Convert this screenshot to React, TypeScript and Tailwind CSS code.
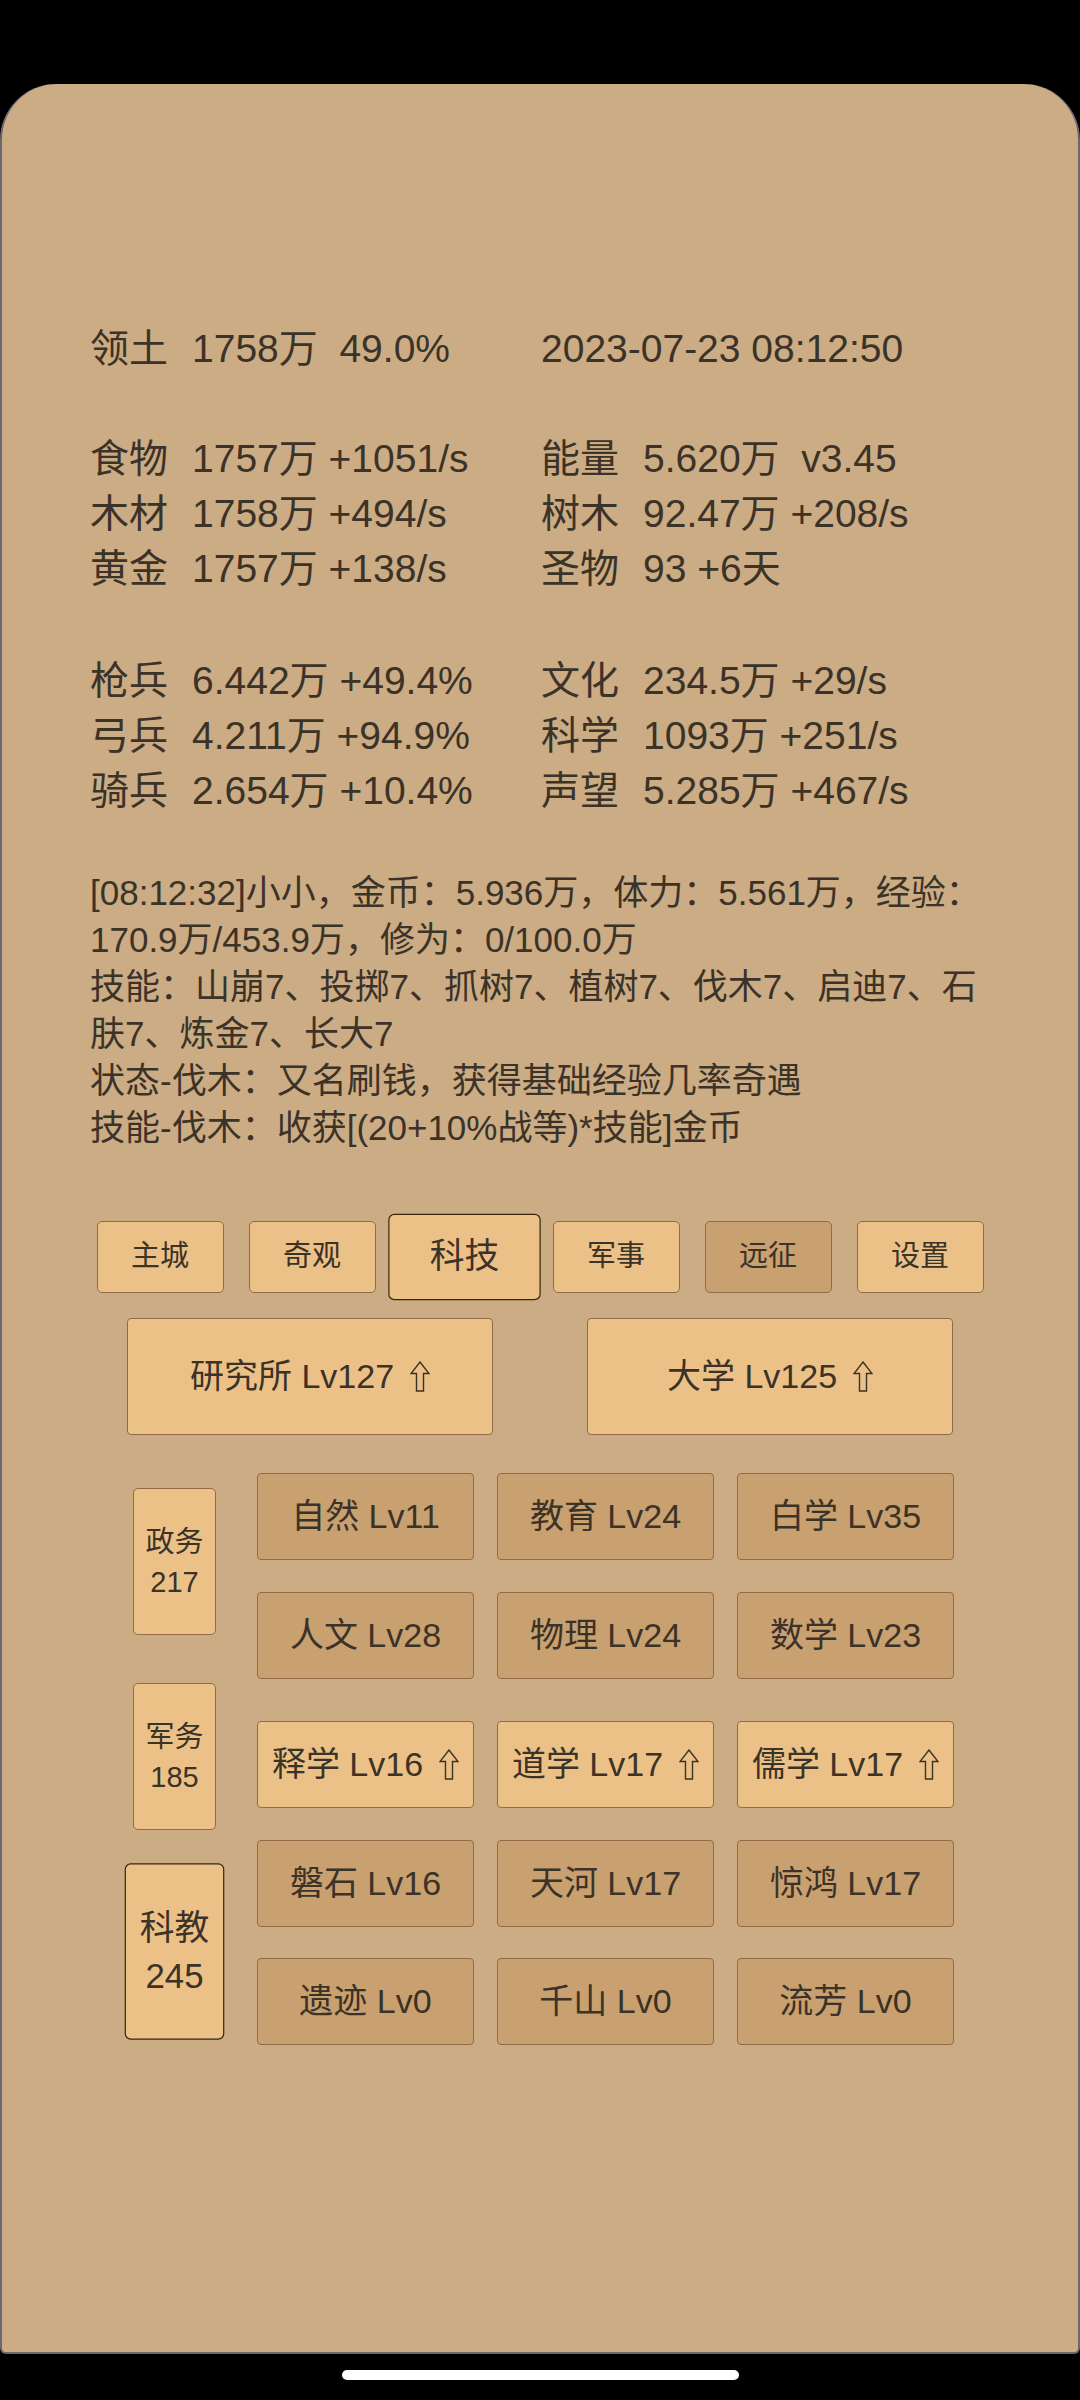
import React from 'react';

const light = 'bg-[#ecc187] border border-[#8f6c47]';
const dark = 'bg-[#c9a06f] border border-[#8f6c47]';

const tabs = [
  { name: '主城', active: false, dark: false },
  { name: '奇观', active: false, dark: false },
  { name: '科技', active: true, dark: false },
  { name: '军事', active: false, dark: false },
  { name: '远征', active: false, dark: true },
  { name: '设置', active: false, dark: false },
];

const techRows = [
  { mt: 'mt-0', up: false, items: ['自然 Lv11', '教育 Lv24', '白学 Lv35'] },
  { mt: 'mt-[32px]', up: false, items: ['人文 Lv28', '物理 Lv24', '数学 Lv23'] },
  { mt: 'mt-[42px]', up: true, items: ['释学 Lv16', '道学 Lv17', '儒学 Lv17'] },
  { mt: 'mt-[32px]', up: false, items: ['磐石 Lv16', '天河 Lv17', '惊鸿 Lv17'] },
  { mt: 'mt-[31px]', up: false, items: ['遗迹 Lv0', '千山 Lv0', '流芳 Lv0'] },
];

const sides = [
  { name: '政务', num: '217', active: false },
  { name: '军务', num: '185', active: false },
  { name: '科教', num: '245', active: true },
];

const Stat = ({ label, value }: { label: string; value: string }) => (
  <div className="w-[451px] flex whitespace-pre">
    <span className="w-[102px] shrink-0">{label}</span>
    <span>{value}</span>
  </div>
);

// outlined "upgrade" arrow
const Arrow = () => (
  <svg className="ml-[16px] shrink-0" width="20" height="31" viewBox="0 0 20 31" fill="none">
    <path d="M10 1 L19 12.5 L13.5 12.5 L13.5 30 L6.5 30 L6.5 12.5 L1 12.5 Z" stroke="#3b3228" strokeWidth="1.4" strokeLinejoin="miter" />
  </svg>
);

export default function App() {
  return (
    <div className="w-[1080px] h-[2400px] bg-black overflow-hidden font-['Liberation_Sans','Noto_Sans_CJK_SC',sans-serif] text-[#3b3228]">
      <div className="h-[84px]" />
      <div className="h-[2270px] bg-[#cbac84] rounded-t-[56px] rounded-b-[6px] border-x-2 border-b-2 border-[#6d6870]">
        {/* stats */}
        <div className="pt-[237px] pl-[88px] text-[39px] leading-[55px]">
          <div className="flex">
            <Stat label="领土" value="1758万  49.0%" />
            <div className="whitespace-pre">2023-07-23 08:12:50</div>
          </div>
          <div className="h-[55px]" />
          <div className="flex">
            <Stat label="食物" value="1757万 +1051/s" />
            <Stat label="能量" value="5.620万  v3.45" />
          </div>
          <div className="flex">
            <Stat label="木材" value="1758万 +494/s" />
            <Stat label="树木" value="92.47万 +208/s" />
          </div>
          <div className="flex">
            <Stat label="黄金" value="1757万 +138/s" />
            <Stat label="圣物" value="93 +6天" />
          </div>
          <div className="h-[57px]" />
          <div className="flex">
            <Stat label="枪兵" value="6.442万 +49.4%" />
            <Stat label="文化" value="234.5万 +29/s" />
          </div>
          <div className="flex">
            <Stat label="弓兵" value="4.211万 +94.9%" />
            <Stat label="科学" value="1093万 +251/s" />
          </div>
          <div className="flex">
            <Stat label="骑兵" value="2.654万 +10.4%" />
            <Stat label="声望" value="5.285万 +467/s" />
          </div>
        </div>

        {/* log */}
        <div className="mt-[51px] pl-[88px] w-[990px] text-[35px] leading-[47px]">
          <p>[08:12:32]小小，金币：5.936万，体力：5.561万，经验：170.9万/453.9万，修为：0/100.0万</p>
          <p>技能：山崩7、投掷7、抓树7、植树7、伐木7、启迪7、石肤7、炼金7、长大7</p>
          <p>状态-伐木：又名刷钱，获得基础经验几率奇遇</p>
          <p>技能-伐木：收获[(20+10%战等)*技能]金币</p>
        </div>

        {/* tabs */}
        <div className="mt-[70px] flex justify-center gap-[25px]">
          {tabs.map((t) => (
            <div
              key={t.name}
              className={`w-[127px] h-[72px] rounded-[5px] flex items-center justify-center text-[29px] ${
                t.dark ? dark : light
              } ${t.active ? 'scale-[1.2] !border-[#3a2410]' : ''}`}
            >
              {t.name}
            </div>
          ))}
        </div>

        {/* buildings */}
        <div className="mt-[25px] flex justify-center gap-[94px]">
          <div className={`w-[366px] h-[117px] rounded-[4px] flex items-center justify-center text-[34px] ${light}`}>
            研究所 Lv127<Arrow />
          </div>
          <div className={`w-[366px] h-[117px] rounded-[4px] flex items-center justify-center text-[34px] ${light}`}>
            大学 Lv125<Arrow />
          </div>
        </div>

        {/* tech grid */}
        <div className="mt-[38px] flex pl-[131px] gap-[41px]">
          <div className="flex flex-col pt-[15px] gap-[48px]">
            {sides.map((s) => (
              <div
                key={s.name}
                className={`w-[83px] h-[147px] rounded-[5px] flex flex-col items-center justify-center text-[29px] leading-[40px] ${light} ${
                  s.active ? 'scale-[1.2] !border-[#3a2410]' : ''
                }`}
              >
                <span>{s.name}</span>
                <span>{s.num}</span>
              </div>
            ))}
          </div>
          <div className="flex flex-col">
            {techRows.map((r, i) => (
              <div key={i} className={`flex gap-[23px] ${r.mt}`}>
                {r.items.map((it) => (
                  <div
                    key={it}
                    className={`w-[217px] h-[87px] rounded-[4px] flex items-center justify-center text-[34px] whitespace-nowrap ${
                      r.up ? light : dark
                    }`}
                  >
                    {it}
                    {r.up && <Arrow />}
                  </div>
                ))}
              </div>
            ))}
          </div>
        </div>
      </div>
      <div className="mt-[16px] mx-auto w-[397px] h-[10px] rounded-full bg-white" />
    </div>
  );
}
